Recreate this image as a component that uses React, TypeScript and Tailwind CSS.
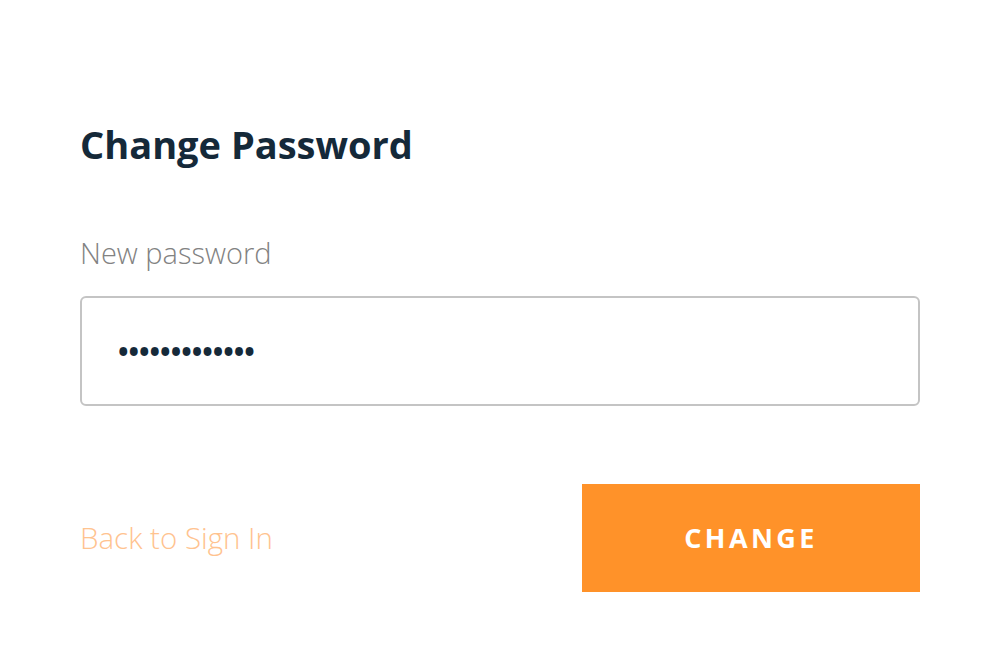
export default function App() {
  return (
    <div className="min-h-screen w-full bg-white" style={{ fontFamily: '"Open Sans", sans-serif' }}>
      <div className="flex flex-col px-[80px] pt-[118px]">
        <h1 className="text-[38px] font-bold leading-[52px] text-[#152939]">Change Password</h1>

        <label className="mt-[64px] text-[29px] font-light leading-[38px] text-[#828282]">New password</label>
        <input
          type="password"
          defaultValue="passwordpass1"
          className="mt-[24px] h-[110px] w-full rounded-[6px] border-2 border-[#c4c4c4] bg-white px-[36px] text-[28px] font-bold text-[#152939] outline-none"
        />

        <div className="mt-[78px] flex items-center justify-between">
          <a href="#" className="text-[29.5px] font-light text-[#ffc38f]">Back to Sign In</a>
          <button className="flex h-[108px] w-[338px] items-center justify-center bg-[#ff9229] text-[27px] font-bold tracking-[3.4px] text-white">
            CHANGE
          </button>
        </div>
      </div>
    </div>
  );
}
